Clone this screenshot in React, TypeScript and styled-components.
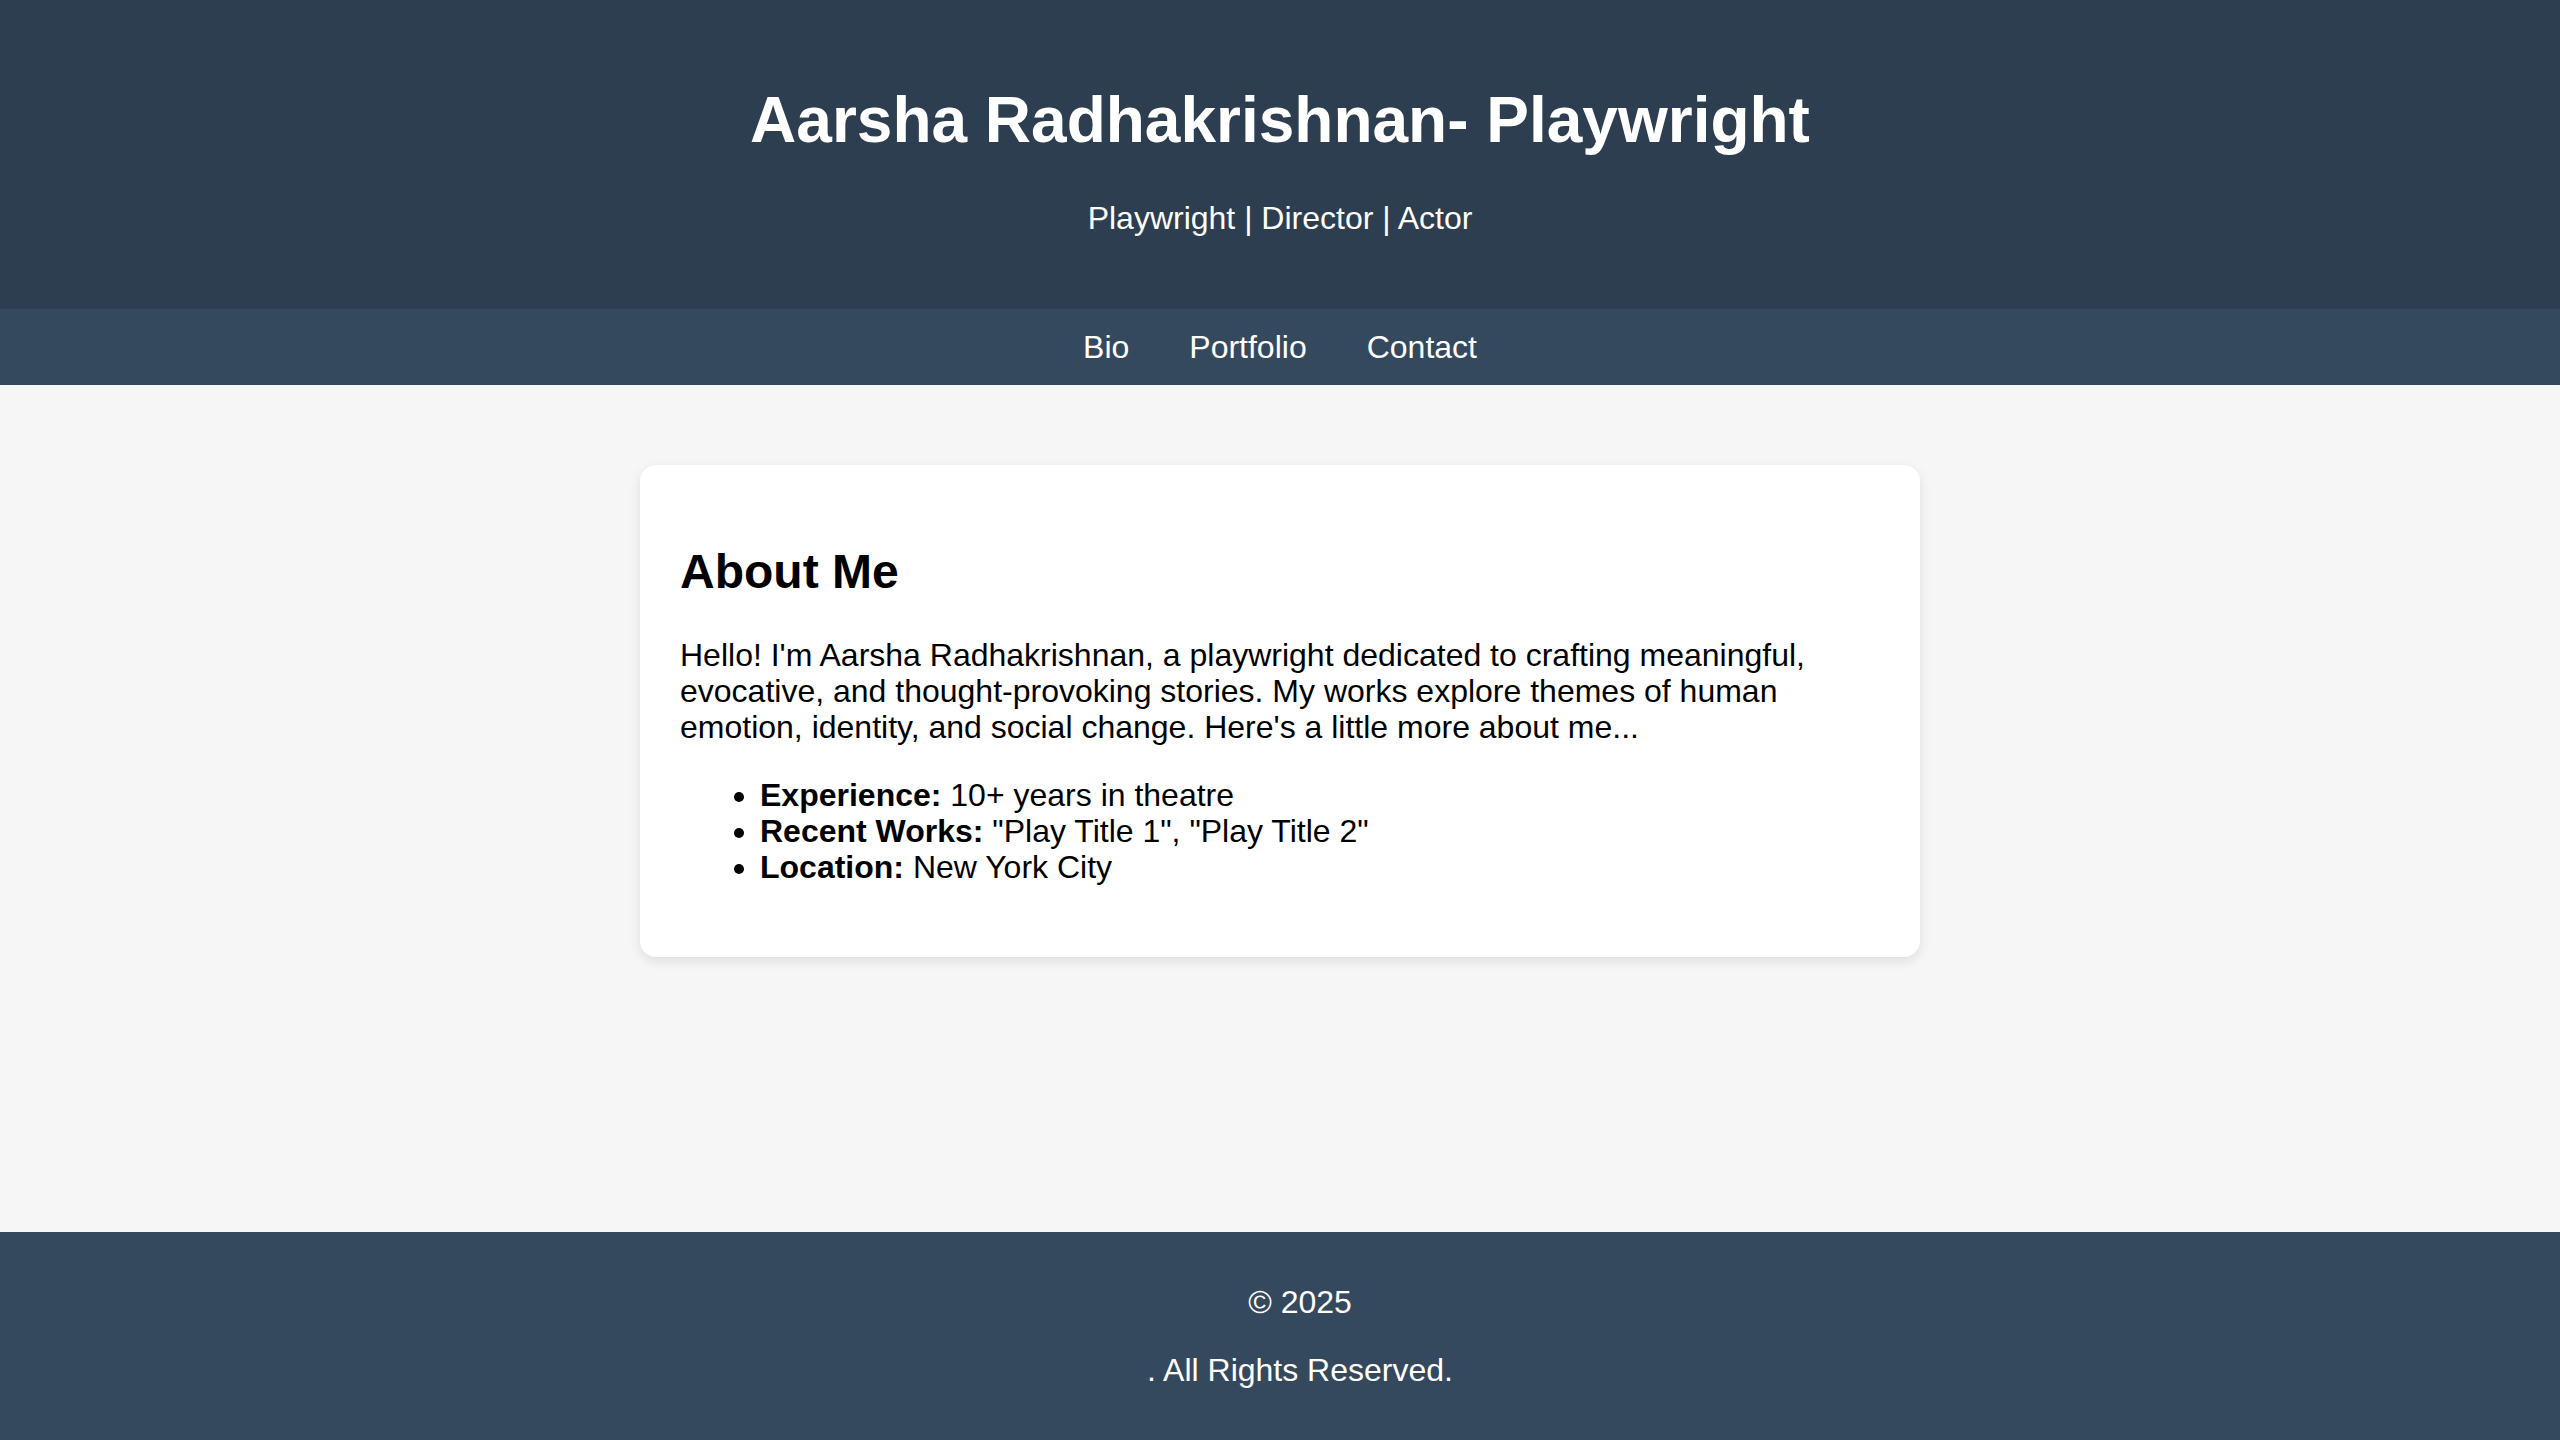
import React from "react";
import styled, { createGlobalStyle } from "styled-components";

const GlobalStyle = createGlobalStyle`
  html, body {
    margin: 0;
    padding: 0;
  }
  body {
    font-family: "Liberation Sans", Arial, sans-serif;
    font-size: 32px;
    background: #f6f6f6;
    color: #000;
  }
`;

const Page = styled.div`
  display: flex;
  flex-direction: column;
  min-height: 100vh;
`;

const Header = styled.header`
  background: #2c3e50;
  color: #fff;
  text-align: center;
  padding: 40px 0;
`;

const Title = styled.h1`
  font-size: 64px;
  font-weight: 700;
  margin: 42.88px 0;
`;

const Subtitle = styled.p`
  font-size: 32px;
  margin: 32px 0;
`;

const Nav = styled.nav`
  background: #34495e;
  display: flex;
  justify-content: center;
  gap: 60px;
  padding: 20px 0;
  line-height: 36px;
`;

const NavLink = styled.a`
  color: #fff;
  text-decoration: none;
  font-size: 32px;
  cursor: pointer;
`;

const Main = styled.main`
  flex: 1;
  padding: 80px 0;
  display: flex;
  justify-content: center;
  align-items: flex-start;
`;

const Card = styled.section`
  width: 1280px;
  box-sizing: border-box;
  background: #fff;
  border-radius: 16px;
  padding: 40px;
  box-shadow: 0 4px 12px rgba(0, 0, 0, 0.1);
`;

const Heading = styled.h2`
  font-size: 48px;
  line-height: 53px;
  font-weight: 700;
  margin: 39.84px 0;
`;

const Paragraph = styled.p`
  margin: 32px 0;
  line-height: 36px;
`;

const List = styled.ul`
  margin: 32px 0;
  padding-left: 80px;
  line-height: 36px;
`;

const Item = styled.li``;

const Footer = styled.footer`
  background: #34495e;
  color: #fff;
  text-align: center;
  padding: 20px 0 20px 40px;
  line-height: 36px;
`;

const FooterLine = styled.p`
  margin: 32px 0;
`;

export default function App() {
  return (
    <Page>
      <GlobalStyle />
      <Header>
        <Title>Aarsha Radhakrishnan- Playwright</Title>
        <Subtitle>Playwright | Director | Actor</Subtitle>
      </Header>
      <Nav>
        <NavLink>Bio</NavLink>
        <NavLink>Portfolio</NavLink>
        <NavLink>Contact</NavLink>
      </Nav>
      <Main>
        <Card>
          <Heading>About Me</Heading>
          <Paragraph>
            Hello! I'm Aarsha Radhakrishnan, a playwright dedicated to crafting meaningful,
            evocative, and thought-provoking stories. My works explore themes of human
            emotion, identity, and social change. Here's a little more about me...
          </Paragraph>
          <List>
            <Item>
              <strong>Experience:</strong> 10+ years in theatre
            </Item>
            <Item>
              <strong>Recent Works:</strong> "Play Title 1", "Play Title 2"
            </Item>
            <Item>
              <strong>Location:</strong> New York City
            </Item>
          </List>
        </Card>
      </Main>
      <Footer>
        <FooterLine>© 2025</FooterLine>
        <FooterLine>. All Rights Reserved.</FooterLine>
      </Footer>
    </Page>
  );
}
